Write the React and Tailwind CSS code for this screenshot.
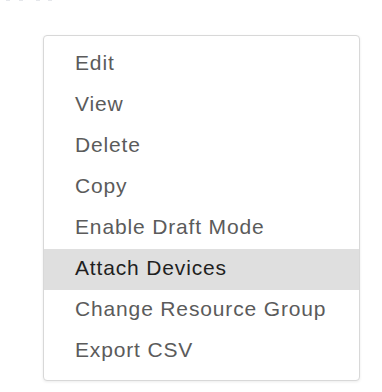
const items = [
  "Edit",
  "View",
  "Delete",
  "Copy",
  "Enable Draft Mode",
  "Attach Devices",
  "Change Resource Group",
  "Export CSV",
];

export default function App() {
  const active = "Attach Devices";

  return (
    <div className="relative h-[392px] w-[382px] bg-white font-['Liberation_Sans',Arial,sans-serif]">
      <div className="flex h-[2px] items-start">
        <span className="ml-[6px] h-px w-[4px] bg-gray-200" />
        <span className="ml-[9px] h-px w-[4px] bg-gray-200" />
        <span className="ml-[13px] h-px w-[4px] bg-gray-200" />
        <span className="ml-[8px] h-px w-[4px] bg-gray-200" />
      </div>
      <div className="ml-[43px] mt-[33px] w-[317px] rounded-[4px] border border-[#d8d8d8] bg-white py-2 shadow-[0_1px_3px_rgba(0,0,0,0.08)]">
        {items.map((item) => (
          <div
            key={item}
            className={
              "h-[41px] pl-[31px] pb-[4px] text-[21px] leading-[37px] tracking-[0.85px] " +
              (item === active ? "bg-[#dfdfdf] text-[#1f1f1f]" : "text-[#5b5b5b]")
            }
          >
            {item}
          </div>
        ))}
      </div>
    </div>
  );
}
